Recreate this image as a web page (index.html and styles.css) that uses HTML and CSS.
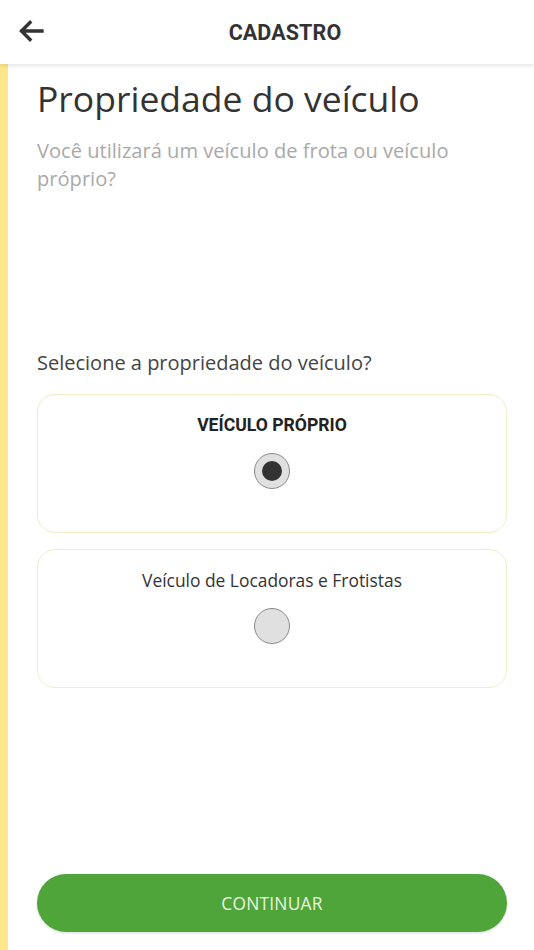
FILE: index.html
```html
<!DOCTYPE html>
<html lang="pt">
<head>
<meta charset="utf-8">
<link rel="stylesheet" href="styles.css">
</head>
<body>
<div class="app">
  <header class="topbar">
    <svg class="back" width="26" height="22" viewBox="0 0 26 22" aria-hidden="true">
      <path d="M24 11H4M12 2.5L3.5 11L12 19.5" fill="none" stroke="#333" stroke-width="3.4" stroke-linecap="square" stroke-linejoin="miter"/>
    </svg>
    <h1 class="topbar-title">CADASTRO</h1>
  </header>
  <main class="content">
    <h2 class="title">Propriedade do veículo</h2>
    <p class="subtitle">Você utilizará um veículo de frota ou veículo próprio?</p>
    <p class="question">Selecione a propriedade do veículo?</p>
    <div class="options">
      <label class="card">
        <span class="card-label strong">VEÍCULO PRÓPRIO</span>
        <span class="radio checked"></span>
      </label>
      <label class="card">
        <span class="card-label">Veículo de Locadoras e Frotistas</span>
        <span class="radio"></span>
      </label>
    </div>
    <div class="spacer"></div>
    <button class="continue">CONTINUAR</button>
  </main>
</div>
</body>
</html>
```
FILE: styles.css
```css
* { box-sizing: border-box; }
html, body { margin: 0; padding: 0; background: #fff; }
body { font-family: "Open Sans", "Noto Sans", sans-serif; color: #333; }
.app { width: 534px; height: 950px; display: flex; flex-direction: column; overflow: hidden; }
.topbar {
  height: 64px; flex: none; display: flex; align-items: center; justify-content: center;
  position: relative; background: #fff; box-shadow: 0 2px 4px rgba(0,0,0,0.10); z-index: 2;
}
.back { position: absolute; left: 18px; top: 20px; }
.topbar-title {
  margin: 0; font-family: Roboto, "Liberation Sans", sans-serif; font-weight: 700;
  font-size: 21.5px; letter-spacing: 0.1px; color: #333; padding-left: 36px;
}
.content {
  flex: 1; display: flex; flex-direction: column;
  border-left: 8px solid #fde68c; padding: 12px 27px 18px 29px;
}
.title { margin: 0; font-weight: 400; font-size: 35.5px; line-height: 44px; color: #333; }
.subtitle { margin: 17px 0 0; font-size: 20.1px; line-height: 28px; color: #a9a9a9; padding-right: 10px; }
.question { margin: 156px 0 0; font-size: 20px; line-height: 28px; color: #444; }
.options { margin-top: 17px; display: flex; flex-direction: column; gap: 16px; }
.card {
  height: 139px; border: 1px solid #f2ecc8; border-radius: 18px; background: #fff;
  display: flex; flex-direction: column; align-items: center; padding-top: 18px;
}
.card-label { font-size: 17.4px; line-height: 24px; color: #333; }
.card-label.strong { font-family: Roboto, "Liberation Sans", sans-serif; font-weight: 700; font-size: 17.6px; color: #222; }
.radio {
  margin-top: 16px; width: 36px; height: 36px; border-radius: 50%;
  border: 1.5px solid #8a8a8a; background: #e0e0e0; display: flex; align-items: center; justify-content: center;
}
.radio.checked::after { content: ""; width: 20px; height: 20px; border-radius: 50%; background: #333; }
.spacer { flex: 1; }
.continue {
  height: 58px; border: none; border-radius: 29px; background: #4fa53a; color: #e9f5df;
  font-family: "Open Sans", "Noto Sans", sans-serif; font-size: 17.4px; letter-spacing: 0.2px;
  box-shadow: 0 1px 3px rgba(0,0,0,0.15);
}
```
